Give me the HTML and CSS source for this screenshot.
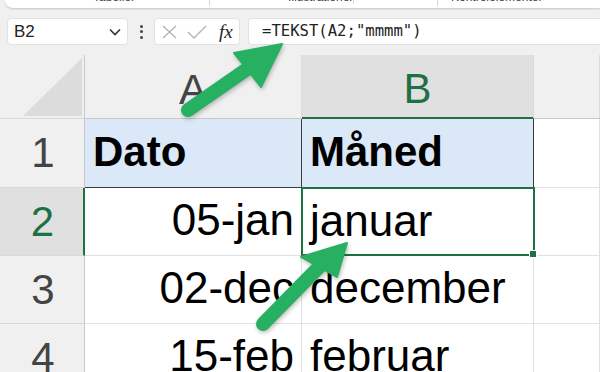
FILE: index.html
```html
<!DOCTYPE html>
<html lang="da">

<head>
    <meta charset="UTF-8">
    <title>TEKST-funktion</title>
    <link rel="stylesheet" href="styles.css">
</head>

<body>
    <div class="window">
        <div class="ribbon">
            <span class="group g1">Tabeller</span>
            <span class="group g2">Illustrationer</span>
            <span class="group g3">Kontrolelementer</span>
        </div>

        <div class="formula-bar">
            <div class="name-box">
                <span>B2</span>
                <svg class="chevron" width="12" height="8" viewBox="0 0 12 8">
                    <path d="M1 1.5 L6 6.5 L11 1.5" fill="none" stroke="#333" stroke-width="1.6" />
                </svg>
            </div>
            <div class="dots"><i></i><i></i><i></i></div>
            <div class="fx-box">
                <svg width="18" height="14" viewBox="0 0 18 14">
                    <path d="M2 1 L15 13 M15 1 L2 13" stroke="#b4b4b4" stroke-width="1.4" />
                </svg>
                <svg width="20" height="14" viewBox="0 0 20 14">
                    <path d="M1 7 L7 13 L19 1" fill="none" stroke="#b4b4b4" stroke-width="1.4" />
                </svg>
                <span class="fx">fx</span>
            </div>
            <div class="formula">=TEKST(A2;"mmmm")</div>
        </div>

        <div class="sheet">
            <div class="row head-row">
                <div class="rh corner"><div class="tri"></div></div>
                <div class="ch col-a">A</div>
                <div class="ch col-b active">B</div>
                <div class="ch col-c"></div>
            </div>
            <div class="row r1">
                <div class="rh">1</div>
                <div class="cell col-a title">Dato</div>
                <div class="cell col-b title b1">Måned</div>
                <div class="cell col-c"></div>
            </div>
            <div class="row">
                <div class="rh active">2</div>
                <div class="cell col-a num">05-jan</div>
                <div class="cell col-b selected">januar<span class="handle"></span></div>
                <div class="cell col-c"></div>
            </div>
            <div class="row">
                <div class="rh">3</div>
                <div class="cell col-a num">02-dec</div>
                <div class="cell col-b">december</div>
                <div class="cell col-c"></div>
            </div>
            <div class="row">
                <div class="rh">4</div>
                <div class="cell col-a num">15-feb</div>
                <div class="cell col-b">februar</div>
                <div class="cell col-c"></div>
            </div>
        </div>

        <!-- callout arrows -->
        <svg class="arrows" width="600" height="372" viewBox="0 0 600 372">
            <g fill="#28b062" stroke="#28b062">
                <line x1="188" y1="110" x2="250" y2="67" stroke-width="14" stroke-linecap="round" />
                <polygon points="234,53 282,44 261,87" stroke-width="2" stroke-linejoin="round" />
                <line x1="263" y1="324" x2="322" y2="264" stroke-width="14" stroke-linecap="round" />
                <polygon points="301,257 347,243 337,277" stroke-width="2" stroke-linejoin="round" />
            </g>
        </svg>
    </div>
</body>

</html>
```

FILE: styles.css
```css
* {
    margin: 0;
    padding: 0;
    box-sizing: border-box;
}

body {
    width: 600px;
    height: 372px;
    overflow: hidden;
    background: #f0f0f0;
    font-family: 'Liberation Sans', Arial, sans-serif;
}

.window {
    position: relative;
    height: 372px;
}

/* ribbon bottom edge */
.ribbon {
    margin-left: 5px;
    height: 8px;
    background: #fff;
    border-bottom-left-radius: 8px;
    box-shadow: 0 1px 2px rgba(0, 0, 0, 0.18);
    position: relative;
    overflow: hidden;
}

.group {
    position: absolute;
    top: -10px;
    font-size: 12px;
    color: #444;
    white-space: nowrap;
}

.g1 {
    left: 88px;
}

.g2 {
    left: 283px;
    border-right: 1px solid #d6d6d6;
    padding-right: 0;
}

.g3 {
    left: 446px;
}

.ribbon::before,
.ribbon::after {
    content: '';
    position: absolute;
    top: 0;
    height: 6px;
    width: 1px;
    background: #d6d6d6;
}

.ribbon::before {
    left: 204px;
}

.ribbon::after {
    left: 432px;
}

/* formula bar */
.formula-bar {
    display: flex;
    align-items: stretch;
    height: 27px;
    margin-top: 10px;
    padding-left: 7px;
}

.name-box,
.fx-box,
.formula {
    background: #fff;
    border: 1px solid #e2e2e2;
    border-radius: 4px;
}

.name-box {
    width: 121px;
    display: flex;
    align-items: center;
    justify-content: space-between;
    padding: 0 6px 0 6px;
    font-size: 17px;
    color: #222;
}

.dots {
    width: 26px;
    display: flex;
    flex-direction: column;
    align-items: center;
    justify-content: center;
    gap: 2.5px;
}

.dots i {
    width: 3px;
    height: 3px;
    border-radius: 50%;
    background: #444;
}

.fx-box {
    width: 86px;
    display: flex;
    align-items: center;
    gap: 8px;
    padding-left: 6px;
}

.fx {
    font-family: 'Liberation Serif', 'Times New Roman', serif;
    font-style: italic;
    font-size: 19px;
    color: #222;
    margin-left: 4px;
}

.formula {
    flex: 1;
    margin-left: 8px;
    border-right: none;
    border-radius: 4px 0 0 4px;
    padding-left: 13px;
    font-family: 'DejaVu Sans Mono', monospace;
    font-size: 15.6px;
    line-height: 25px;
    color: #222;
}

/* sheet grid */
.sheet {
    margin-top: 10px;
}

.row {
    display: flex;
    height: 68px;
}

.head-row {
    height: 64px;
}

.r1 {
    height: 69px;
}

.rh {
    width: 85px;
    flex: none;
    display: flex;
    align-items: center;
    justify-content: center;
    padding-left: 2px;
    background: #f0f0f0;
    border-right: 1px solid #c8c8c8;
    border-bottom: 1px solid #dadada;
    font-size: 42px;
    color: #444;
}

.rh.active {
    background: #e0e0e0;
    color: #1e7145;
    border-right: 2px solid #1e7145;
}

.corner {
    align-items: flex-end;
    justify-content: flex-end;
    padding: 0 2px 2px 0;
}

.tri {
    width: 59px;
    height: 58px;
    background: #dcdcdc;
    clip-path: polygon(100% 0, 100% 100%, 0 100%);
}

.ch {
    display: flex;
    align-items: center;
    justify-content: center;
    padding-top: 6px;
    background: #f0f0f0;
    border-right: 1px solid #dadada;
    border-bottom: 1px solid #c8c8c8;
    font-size: 42px;
    color: #444;
}

.ch.active {
    background: #e0e0e0;
    color: #1e7145;
    border-bottom: 2px solid #1e7145;
}

.col-a {
    width: 217px;
    flex: none;
}

.col-b {
    width: 232px;
    flex: none;
}

.col-c {
    flex: 1;
}

.cell {
    background: #fff;
    border-right: 1px solid #e1e1e1;
    border-bottom: 1px solid #e1e1e1;
    font-size: 44px;
    line-height: 64px;
    padding: 0 8px;
    color: #000;
    white-space: nowrap;
    overflow: visible;
}

.cell.num {
    text-align: right;
    padding-right: 7px;
    direction: rtl;
    unicode-bidi: plaintext;
}

.r1 .col-a,
.r1 .col-b {
    background: #dae8f7;
    border-bottom: 1px solid #3c3c3c;
}

.cell.title {
    font-weight: bold;
    font-size: 42px;
    line-height: 66px;
}

.cell.b1 {
    border-left: 1px solid #3c3c3c;
    border-right: 1px solid #3c3c3c;
    padding-left: 8px;
    margin-left: -1px;
    width: 233px;
}

.cell.selected {
    position: relative;
    border: 2px solid #1e7145;
    margin-left: -1px;
    margin-top: -1px;
    height: 69px;
    width: 234px;
    padding-left: 7px;
    line-height: 63px;
}

.handle {
    position: absolute;
    right: -4px;
    bottom: -4px;
    width: 6px;
    height: 6px;
    background: #1e7145;
    border: 1px solid #fff;
    box-sizing: content-box;
}

.arrows {
    position: absolute;
    left: 0;
    top: 0;
    pointer-events: none;
    filter: drop-shadow(1px 2px 2px rgba(0, 0, 0, 0.25));
}
```
